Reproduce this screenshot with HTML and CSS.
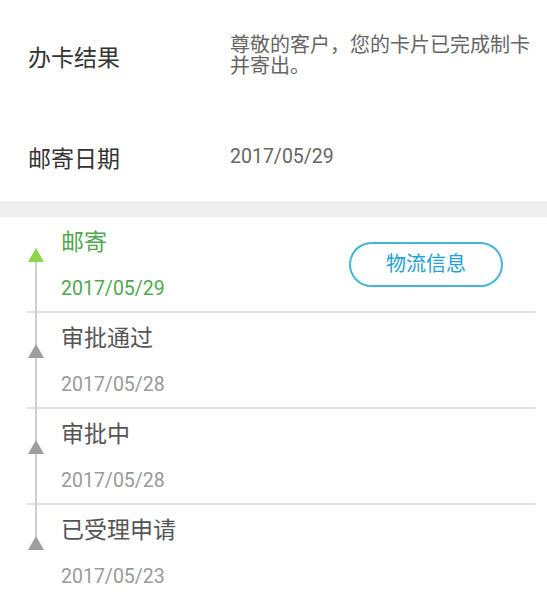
FILE: index.html
```html
<!DOCTYPE html>
<html lang="zh-CN">
<head>
<meta charset="UTF-8">
<title>办卡进度</title>
<link rel="stylesheet" href="styles.css">
</head>
<body>
<div class="info">
    <div class="row row-result">
        <div class="label">办卡结果</div>
        <div class="value">尊敬的客户，您的卡片已完成制卡并寄出。</div>
    </div>
    <div class="row row-date">
        <div class="label">邮寄日期</div>
        <div class="value">2017/05/29</div>
    </div>
</div>
<div class="gap"></div>
<ul class="timeline">
    <li class="step current">
        <div class="step-text">
            <div class="step-title">邮寄</div>
            <div class="step-date">2017/05/29</div>
        </div>
        <a class="btn">物流信息</a>
    </li>
    <li class="step">
        <div class="step-text">
            <div class="step-title">审批通过</div>
            <div class="step-date">2017/05/28</div>
        </div>
    </li>
    <li class="step">
        <div class="step-text">
            <div class="step-title">审批中</div>
            <div class="step-date">2017/05/28</div>
        </div>
    </li>
    <li class="step last">
        <div class="step-text">
            <div class="step-title">已受理申请</div>
            <div class="step-date">2017/05/23</div>
        </div>
    </li>
</ul>
</body>
</html>
```

FILE: styles.css
```css
body{
    margin: 0;
    background: #fff;
    font-family: Roboto, "Noto Sans CJK SC", sans-serif;
}
ul{
    margin: 0;
    padding: 0;
    list-style: none;
}
.row{
    display: flex;
    align-items: center;
    padding: 0 10px 0 28px;
}
.row-result{
    height: 112px;
}
.row-date{
    height: 89px;
}
.label{
    width: 202px;
    flex: none;
    font-size: 23px;
    color: #333;
}
.value{
    flex: 1;
    font-size: 20px;
    line-height: 21px;
    color: #666;
}
.row-date .value{
    font-size: 19.5px;
}
.gap{
    height: 16px;
    background: #eee;
}
.timeline{
    margin: 0 12px 0 27px;
}
.step{
    position: relative;
    box-sizing: border-box;
    height: 96px;
    padding: 11px 0 0 34px;
    display: flex;
    border-bottom: 2px solid #e2e2e2;
}
.step.last{
    border-bottom: none;
}
.step::before{
    content: "";
    position: absolute;
    left: 8px;
    width: 2px;
    top: 0;
    bottom: -2px;
    background: #cfcfcf;
}
.step.current::before{
    top: 45px;
}
.step.last::before{
    bottom: auto;
    height: 32px;
}
.step::after{
    content: "";
    position: absolute;
    left: 1px;
    top: 31px;
    width: 0;
    height: 0;
    border-left: 8px solid transparent;
    border-right: 8px solid transparent;
    border-bottom: 14px solid #9e9e9e;
}
.step.current::after{
    border-bottom-color: #8dd34c;
}
.step-text{
    flex: 1;
}
.step-title{
    font-size: 23px;
    line-height: 30px;
    color: #555;
}
.step-date{
    margin-top: 19px;
    font-size: 19.5px;
    line-height: 24px;
    color: #9a9a9a;
}
.current .step-title,
.current .step-date{
    color: #4fa84f;
}
.btn{
    align-self: flex-start;
    margin: 14px 32px 0 0;
    box-sizing: border-box;
    width: 154px;
    height: 45px;
    line-height: 41px;
    text-align: center;
    border: 2px solid #45b5d6;
    border-radius: 23px;
    font-size: 20px;
    color: #229fd4;
}
```
